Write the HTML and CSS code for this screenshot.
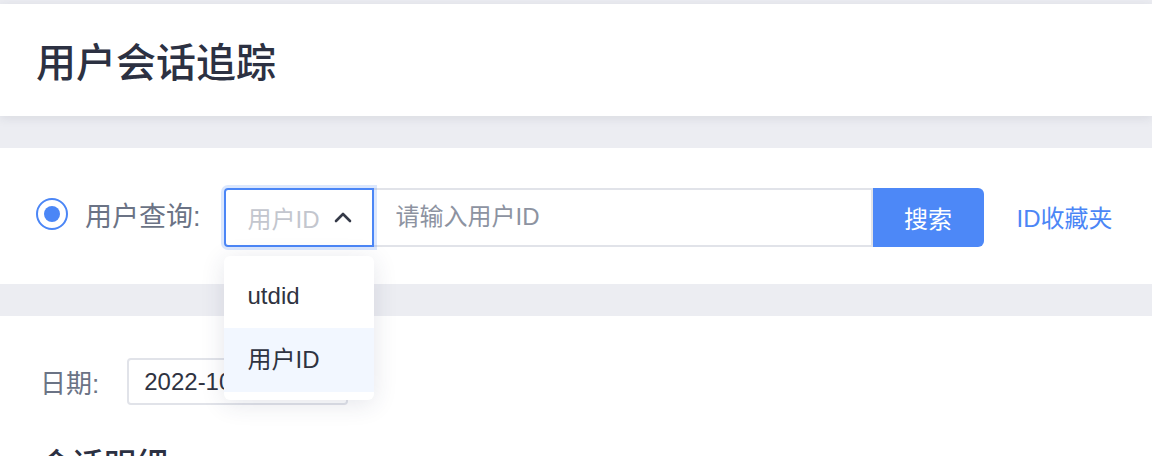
FILE: index.html
```html
<!DOCTYPE html>
<html lang="zh-CN">
<head>
  <meta charset="UTF-8">
  <title>用户会话追踪</title>
  <link rel="stylesheet" href="styles.css">
</head>
<body>

  <div class="page-header">
    <h1>用户会话追踪</h1>
  </div>

  <div class="panel query-panel">
    <span class="radio checked"><span class="radio-dot"></span></span>
    <span class="field-label">用户查询:</span>

    <div class="search-group">
      <div class="type-select focused">
        <span class="type-value">用户ID</span>
        <svg class="chevron" width="20" height="12" viewBox="0 0 20 12">
          <path d="M3 10 L10 3 L17 10" fill="none" stroke="#353a48" stroke-width="2.6" stroke-linecap="round" stroke-linejoin="round"/>
        </svg>

        <ul class="type-menu">
          <li>utdid</li>
          <li class="active">用户ID</li>
        </ul>
      </div>
      <input class="search-input" type="text" placeholder="请输入用户ID">
      <button class="search-button">搜索</button>
    </div>

    <a class="fav-link" href="#">ID收藏夹</a>
  </div>

  <div class="panel detail-panel">
    <div class="date-row">
      <span class="field-label">日期:</span>
      <div class="date-box">2022-10-08</div>
    </div>
    <h2>会话明细</h2>
  </div>

</body>
</html>
```

FILE: styles.css
```css
body {
  margin: 0;
  padding-top: 4px;
  background-color: #ecedf2;
  font-family: "Liberation Sans", "Noto Sans CJK SC", sans-serif;
  color: #2c3142;
  overflow: hidden;
}
.page-header {
  height: 112px;
  background: #fff;
  display: flex;
  align-items: center;
  padding-left: 36px;
  box-shadow: 0 2px 10px rgba(40, 45, 70, 0.1);
  position: relative;
  z-index: 1;
}
.page-header h1 {
  margin: 0;
  font-size: 40px;
  font-weight: 500;
  color: #2c3142;
}
.panel {
  background: #fff;
  margin-top: 32px;
}
.query-panel {
  height: 136px;
  display: flex;
  align-items: center;
  padding-left: 36px;
  position: relative;
  z-index: 2;
}
.radio {
  width: 28px;
  height: 28px;
  border: 2px solid #4b86f6;
  border-radius: 50%;
  display: flex;
  align-items: center;
  justify-content: center;
  margin-right: 17px;
  margin-top: -4px;
}
.radio-dot {
  width: 16px;
  height: 16px;
  border-radius: 50%;
  background: #4b86f6;
}
.field-label {
  font-size: 27px;
  color: #6b7385;
}
.query-panel .field-label {
  margin-right: 23px;
  margin-top: -4px;
}
.search-group {
  display: flex;
  height: 59px;
  margin-top: 2px;
}
.type-select {
  position: relative;
  width: 150px;
  box-sizing: border-box;
  border: 2px solid #e1e3e9;
  border-radius: 4px 0 0 4px;
  display: flex;
  align-items: center;
  padding-left: 22px;
  z-index: 1;
}
.type-select.focused {
  border-color: #4b86f6;
  box-shadow: 0 0 0 3px rgba(75, 134, 246, 0.2);
}
.type-value {
  font-size: 24px;
  color: #c3c6ce;
}
.chevron {
  margin-left: 13px;
}
.type-menu {
  position: absolute;
  top: 66px;
  left: -2px;
  width: 150px;
  margin: 0;
  padding: 8px 0;
  list-style: none;
  background: #fff;
  border-radius: 6px;
  box-shadow: 0 4px 24px rgba(40, 50, 90, 0.12);
}
.type-menu li {
  height: 64px;
  line-height: 64px;
  padding-left: 24px;
  font-size: 24px;
  color: #2f3341;
}
.type-menu li.active {
  background: #f2f7ff;
}
.search-input {
  width: 499px;
  box-sizing: border-box;
  border: 2px solid #e1e3e9;
  border-left: none;
  padding: 0 22px;
  font-size: 24px;
  font-family: inherit;
  outline: none;
}
.search-input::placeholder {
  color: #8d93a1;
}
.search-button {
  width: 111px;
  border: none;
  border-radius: 0 6px 6px 0;
  background-color: #4d88f7;
  color: white;
  font-size: 24px;
  font-family: inherit;
  cursor: pointer;
}
.fav-link {
  margin-left: 33px;
  font-size: 24px;
  color: #4b86f6;
  text-decoration: none;
}
.detail-panel {
  height: 98px;
  padding: 42px 40px 0;
  overflow: hidden;
}
.date-row {
  display: flex;
  align-items: center;
}
.date-row .field-label {
  font-size: 26px;
  margin-right: 28px;
}
.date-box {
  width: 221px;
  height: 47px;
  box-sizing: border-box;
  border: 2px solid #e1e3e9;
  border-radius: 4px;
  padding-left: 15px;
  line-height: 43px;
  font-size: 24px;
  color: #2f3341;
}
.detail-panel h2 {
  margin: 34px 0 0;
  font-size: 32px;
  font-weight: 500;
  color: #2c3142;
}
```
